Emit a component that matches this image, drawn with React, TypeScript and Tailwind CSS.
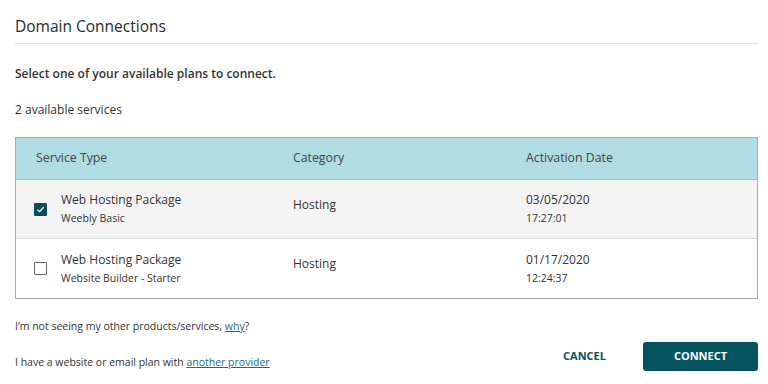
import { useState } from 'react'

const rows = [
  { id: 1, name: 'Web Hosting Package', plan: 'Weebly Basic', category: 'Hosting', date: '03/05/2020', time: '17:27:01' },
  { id: 2, name: 'Web Hosting Package', plan: 'Website Builder - Starter', category: 'Hosting', date: '01/17/2020', time: '12:24:37' }
]

function Checkbox({ checked, onClick }: { checked: boolean; onClick: () => void }) {
  return (
    <button
      type="button"
      onClick={onClick}
      className={`flex h-[13px] w-[13px] shrink-0 items-center justify-center rounded-[1px] border ${
        checked ? 'border-[#0b4f5c] bg-[#0b4f5c]' : 'border-[#666] bg-white'
      }`}
    >
      {checked && (
        <svg width="9" height="9" viewBox="0 0 10 10" fill="none">
          <path d="M1.5 5.2 L4 7.5 L8.5 2.5" stroke="white" strokeWidth="1.3" />
        </svg>
      )}
    </button>
  )
}

export default function App() {
  const [selected, setSelected] = useState(1)

  return (
    <div className="h-[384px] w-[768px] bg-white px-[15px] pt-[16px] text-[#333] font-['Open_Sans',sans-serif]">
      <h1 className="border-b border-[#e2e2e2] pb-[7px] text-[15.5px] leading-[20px] font-normal text-[#2a2a2a] mr-[-5px]">
        Domain Connections
      </h1>

      <p className="mt-[21px] text-[12px] leading-[18px] font-semibold text-[#333]">
        Select one of your available plans to connect.
      </p>
      <p className="mt-[18px] text-[12px] leading-[18px] text-[#333]">2 available services</p>

      <div className="mt-[18px] mr-[-5px] border border-[#a9a9a9]">
        <div className="grid h-[42px] grid-cols-[258px_233px_1fr] items-center border-b border-[#9fc3cb] bg-[#b2dce4] text-[12.3px] text-[#444]">
          <div className="pl-[20px]">Service Type</div>
          <div className="pl-[19px]">Category</div>
          <div className="pl-[19px]">Activation Date</div>
        </div>
        {rows.map((row, i) => (
          <div
            key={row.id}
            className={`grid h-[59px] grid-cols-[258px_233px_1fr] items-center text-[12px] ${
              selected === row.id ? 'bg-[#f4f4f4]' : 'bg-white'
            } ${i === 0 ? 'border-b border-[#dcdcdc]' : ''}`}
          >
            <div className="flex items-center pl-[18px]">
              <Checkbox checked={selected === row.id} onClick={() => setSelected(row.id)} />
              <div className="ml-[14px]">
                <div className="leading-[18px]">{row.name}</div>
                <div className="text-[10.5px] leading-[18px]">{row.plan}</div>
              </div>
            </div>
            <div className="mb-[9px] pl-[19px]">{row.category}</div>
            <div className="pl-[19px]">
              <div className="leading-[18px]">{row.date}</div>
              <div className="text-[10.5px] leading-[18px]">{row.time}</div>
            </div>
          </div>
        ))}
      </div>

      <p className="mt-[18px] text-[10.5px] leading-[18px]">
        I’m not seeing my other products/services,{' '}
        <a href="#" className="text-[#1b6c80] underline">why</a>?
      </p>

      <div className="mt-[7px] flex items-end justify-between mr-[-5px]">
        <p className="text-[10.5px] leading-[18px]">
          I have a website or email plan with{' '}
          <a href="#" className="text-[#1b6c80] underline">another provider</a>
        </p>
        <div className="flex items-center">
          <button type="button" className="mr-[37px] text-[11px] font-bold text-[#0b4f5c]">
            CANCEL
          </button>
          <button
            type="button"
            className="h-[29px] w-[115px] rounded-[3px] bg-[#04535f] text-[11px] font-bold text-white"
          >
            CONNECT
          </button>
        </div>
      </div>
    </div>
  )
}
